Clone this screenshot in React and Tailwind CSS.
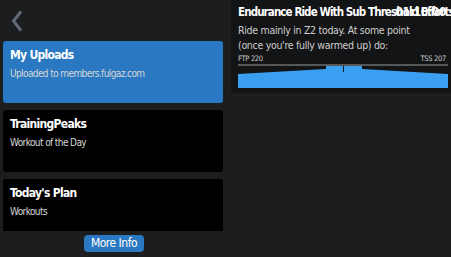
const FONT = { fontFamily: '"DejaVu Sans Condensed", "DejaVu Sans", sans-serif' };

function Card({ title, sub, active }) {
  return (
    <div
      className={`h-[62px] shrink-0 rounded-[3px] px-[7px] pt-[6px] ${
        active ? 'bg-[#2a78c1]' : 'bg-black'
      }`}
    >
      <div className="text-[12px] font-bold leading-[16px] tracking-[-0.7px] text-white">{title}</div>
      <div className="mt-[4px] text-[10px] leading-[13px] tracking-[-0.6px] text-[#d6d6d6]">{sub}</div>
    </div>
  );
}

function Chart() {
  return (
    <svg width="210" height="26" viewBox="0 0 210 26" className="block">
      <line x1="0" y1="1" x2="210" y2="1" stroke="#9a9a9a" strokeWidth="1" />
      <path d="M0 10 L88 5 L88 2 L124 2 L124 5 L210 10 L210 24 L0 24 Z" fill="#3a9ff0" />
      <line x1="105.5" y1="2" x2="105.5" y2="8" stroke="#1a1a1a" strokeWidth="1" />
    </svg>
  );
}

export default function App() {
  return (
    <div className="flex h-[257px] w-[451px] overflow-hidden bg-[#1c1d1f]" style={FONT}>
      <div className="flex w-[231px] shrink-0 flex-col">
        <div className="h-[41px] shrink-0 pl-[11px] pt-[10px]">
          <svg width="12" height="22" viewBox="0 0 12 22">
            <path d="M10 1.5 L2.5 11 L10 20.5" fill="none" stroke="#626978" strokeWidth="3" />
          </svg>
        </div>
        <div className="flex h-[190px] flex-col gap-[7px] overflow-hidden pl-[3px] pr-[8px]">
          <Card title="My Uploads" sub="Uploaded to members.fulgaz.com" active />
          <Card title="TrainingPeaks" sub="Workout of the Day" />
          <Card title="Today's Plan" sub="Workouts" />
        </div>
        <div className="flex justify-center pt-[4px]">
          <button className="ml-[-3px] h-[17px] rounded-[4px] bg-[#2a78c1] px-[7px] text-[12px] leading-[17px] tracking-[-0.5px] text-white">
            More Info
          </button>
        </div>
      </div>
      <div className="min-w-0 flex-1 overflow-hidden">
        <div className="h-[93px] rounded-bl-[4px] bg-[#131415] pl-[7px] pr-[5px] pt-[3px]">
          <div className="relative h-[18px]">
            <div className="whitespace-nowrap text-[11.5px] font-bold leading-[18px] tracking-[-0.9px] text-white">
              Endurance Ride With Sub Threshold Efforts
            </div>
            <div className="absolute right-0 top-0 text-[12px] font-bold leading-[18px] tracking-[-0.4px] text-white">
              01:10:00
            </div>
          </div>
          <div className="mt-[2px] text-[10.5px] leading-[15px] tracking-[-0.3px] text-[#cfcfcf]">
            Ride mainly in Z2 today. At some point
            <br />
            (once you're fully warmed up) do:
          </div>
          <div className="mt-[1px] flex justify-between text-[7.5px] leading-[10px] tracking-[-0.3px] text-[#cfcfcf]">
            <span>FTP 220</span>
            <span>TSS 207</span>
          </div>
          <Chart />
        </div>
      </div>
    </div>
  );
}
